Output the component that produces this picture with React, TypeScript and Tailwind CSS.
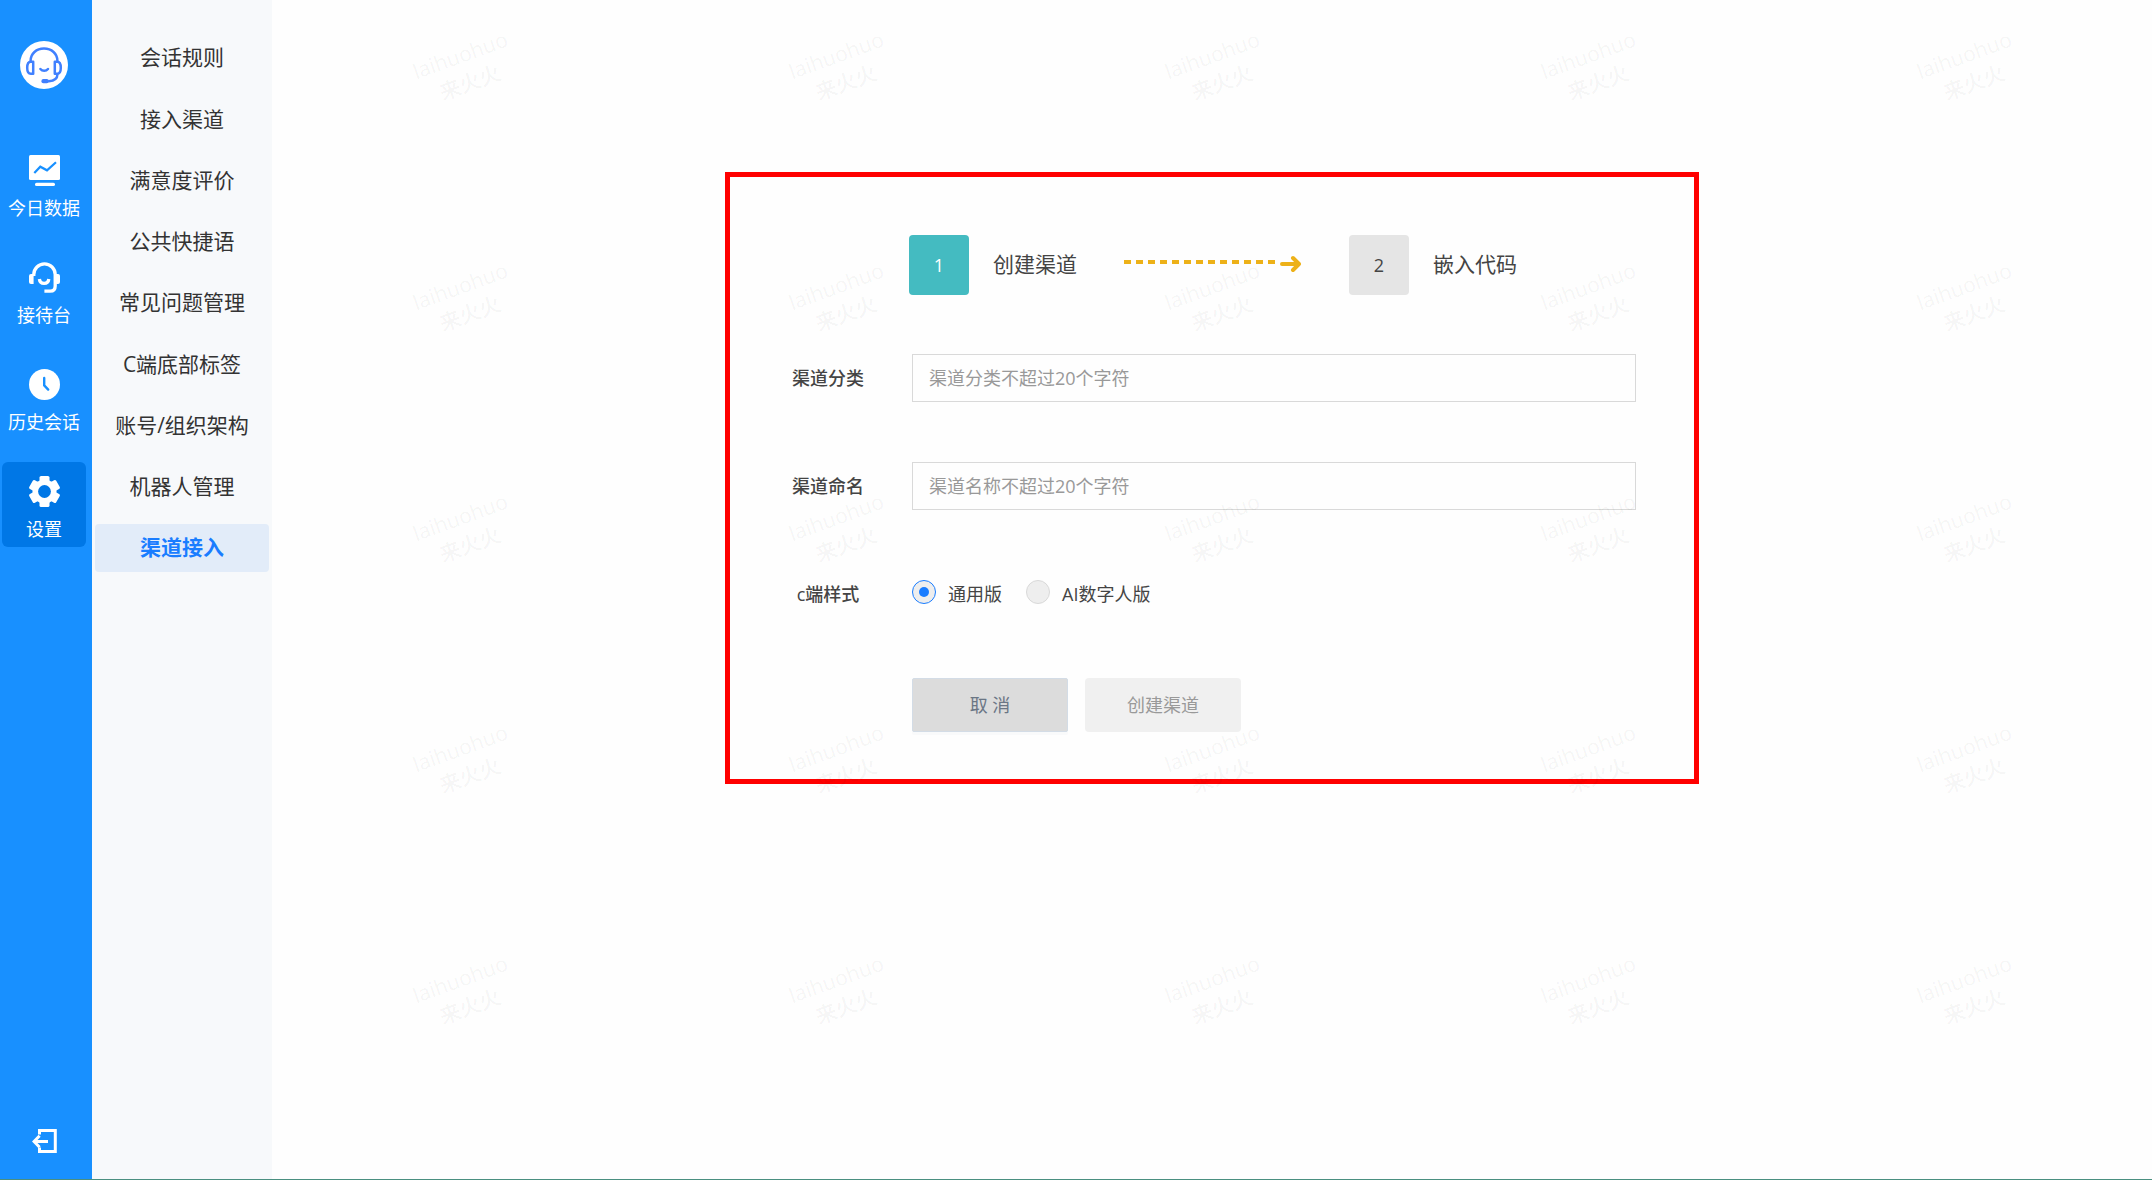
import React, { useState } from "react";
import clsx from "clsx";

const AvatarIcon = () => (
  <svg width="48" height="48" viewBox="0 0 48 48" fill="none">
    <circle cx="24" cy="24" r="24" fill="#fff" />
    <g stroke="#4080ff" strokeWidth="2.5" strokeLinecap="round" strokeLinejoin="round">
      <path d="M10.6 20C10.6 12.6 16.4 7.6 24 7.6S37.4 12.6 37.4 20" />
      <path d="M13.2 20.8v12h-2.4c-2.2 0-3.6-2.4-3.6-6s1.4-6 3.6-6z" />
      <path d="M34.8 20.8v12h2.4c2.2 0 3.6-2.4 3.6-6s-1.4-6-3.6-6z" />
      <path d="M20.4 28c2 2.4 5.6 2.4 7.6 0" />
      <path d="M37.4 33.4c0 3.8-3.2 6.2-8.6 6.8" />
    </g>
    <rect x="21.4" y="38" width="7.4" height="4.2" rx="2" fill="#4080ff" />
  </svg>
);

const DataIcon = () => (
  <svg width="31" height="31" viewBox="0 0 31 31" fill="none">
    <rect width="31" height="25" rx="1.5" fill="#fff" />
    <path d="M5.3 18l6-6.3 6.7 3.6 9-8" stroke="#1890ff" strokeWidth="2.2" />
    <rect x="6" y="27.7" width="20" height="3.3" rx="1.6" fill="#fff" />
  </svg>
);

const DeskIcon = () => (
  <svg width="31" height="31" viewBox="0 0 31 31" fill="none">
    <g stroke="#fff" strokeWidth="3.3">
      <path d="M4.8 14v-1.4a10.7 10.7 0 0 1 21.4 0V24c0 3.2-1.8 5.2-5 5.2h-5.8" />
      <path d="M10.4 17c.6 5.8 8.8 5.8 9.4 0" />
    </g>
    <path d="M4.6 12v10H2a2 2 0 0 1-2-2v-6a2 2 0 0 1 2-2zM26 12v10h3a2 2 0 0 0 2-2v-6a2 2 0 0 0-2-2z" fill="#fff" />
  </svg>
);

const HistoryIcon = () => (
  <svg width="31" height="31" viewBox="0 0 31 31" fill="none">
    <circle cx="15.5" cy="15.5" r="15.5" fill="#fff" />
    <path d="M15.2 9v7.4l4 4.2" stroke="#1890ff" strokeWidth="2.4" strokeLinecap="round" strokeLinejoin="round" />
  </svg>
);

const SettingsIcon = () => (
  <svg width="31" height="31" viewBox="0 0 31 31">
    <g fill="#fff">
      <circle cx="15.5" cy="15.5" r="12" />
      {[0, 60, 120].map((deg) => (
        <rect key={deg} x="10.5" width="10" height="31" rx="1.6" transform={`rotate(${deg} 15.5 15.5)`} />
      ))}
    </g>
    <circle cx="15.5" cy="15.5" r="6.4" fill="#0077e6" />
  </svg>
);

const ExitIcon = () => (
  <svg width="25" height="24" viewBox="0 0 25 24" fill="none" stroke="#fff" strokeWidth="3">
    <path d="M7.5 5.6V1.5h15.8v21H7.5v-4.1" />
    <path d="M16 12.5H3M7.6 6.8L2 12.5l5.6 5.7" />
  </svg>
);

const ArrowIcon = () => (
  <svg width="177" height="20" viewBox="0 0 177 20" fill="none" stroke="#edb118">
    <path d="M0 7h153" strokeWidth="4" strokeDasharray="7 5" />
    <path d="M158 9h17M169 3l6 6-6 6" strokeWidth="4" strokeLinecap="round" strokeLinejoin="round" />
  </svg>
);

const mainNav = [
  { label: "今日数据", icon: DataIcon },
  { label: "接待台", icon: DeskIcon },
  { label: "历史会话", icon: HistoryIcon },
  { label: "设置", icon: SettingsIcon },
];

const subNav = [
  "会话规则",
  "接入渠道",
  "满意度评价",
  "公共快捷语",
  "常见问题管理",
  "C端底部标签",
  "账号/组织架构",
  "机器人管理",
  "渠道接入",
];

const styleOptions = [
  { value: "common", label: "通用版" },
  { value: "ai", label: "AI数字人版" },
];

const Sidebar = () => (
  <aside className="w-[92px] shrink-0 bg-[#1890ff] text-white flex flex-col pl-0.5 pr-1.5 pt-[41px] pb-[26px]">
    <a href="#" aria-label="客服" className="self-center">
      <AvatarIcon />
    </a>
    <nav className="mt-[52px] flex flex-col gap-[22px]">
      {mainNav.map(({ label, icon: Icon }) => (
        <a
          key={label}
          href="#"
          className={clsx(
            "flex flex-col items-center rounded-md pt-3.5 pb-1.5 gap-2.5 text-lg leading-6 whitespace-nowrap",
            label === "设置" && "bg-[#0077e6]",
          )}
        >
          <Icon />
          {label}
        </a>
      ))}
    </nav>
    <button type="button" aria-label="退出" className="mt-auto self-center">
      <ExitIcon />
    </button>
  </aside>
);

const SubMenu = () => (
  <nav className="w-[180px] shrink-0 bg-[#f7f9fb] px-[3px] pt-[34px]">
    <ul className="h-[538px] flex flex-col justify-between">
      {subNav.map((item) => (
        <li key={item}>
          <a
            href="#"
            className={clsx(
              "flex h-12 items-center justify-center rounded text-[21px] whitespace-nowrap",
              item === "渠道接入" ? "bg-[#e2ecf9] text-[#1a7dff] font-bold" : "text-[#333]",
            )}
          >
            {item}
          </a>
        </li>
      ))}
    </ul>
  </nav>
);

const Watermark = () => (
  <div
    aria-hidden="true"
    className="absolute inset-0 overflow-hidden pointer-events-none select-none grid grid-cols-5 auto-rows-[231px]"
  >
    {Array.from({ length: 25 }, (_, i) => (
      <div key={i} className="flex justify-center pt-10 pl-3">
        <div className="h-15 -rotate-20 text-center text-[21px] leading-[29px] font-medium text-black/5">
          laihuohuo
          <br />
          来火火
        </div>
      </div>
    ))}
  </div>
);

interface StepProps {
  index: number;
  label: string;
  active?: boolean;
}

const Step: React.FC<StepProps> = ({ index, label, active }) => (
  <li className="flex items-center gap-6">
    <span
      className={clsx(
        "size-15 rounded flex items-center justify-center text-lg",
        active ? "bg-[#44bbc1] text-white" : "bg-[#e5e5e5] text-[#444]",
      )}
    >
      {index}
    </span>
    <span className="text-[21px] text-[#444] whitespace-nowrap">{label}</span>
  </li>
);

interface FieldProps {
  id: string;
  label: string;
  placeholder: string;
}

const Field: React.FC<FieldProps> = ({ id, label, placeholder }) => (
  <div className="flex items-center gap-12">
    <label htmlFor={id} className="w-[72px] shrink-0 text-center font-medium whitespace-nowrap">
      {label}
    </label>
    <input
      id={id}
      type="text"
      placeholder={placeholder}
      className="h-12 flex-1 min-w-0 border border-[#d9d9d9] px-4 placeholder:text-[#999] outline-none"
    />
  </div>
);

const ChannelForm = () => {
  const [style, setStyle] = useState("common");

  return (
    <section className="w-full max-w-[974px] mx-auto border-5 border-[#ff0000] pt-[58px] pb-[47px] pl-[62px] pr-[58px]">
      <ol className="flex items-center pl-[117px]">
        <Step index={1} label="创建渠道" active />
        <li aria-hidden="true" className="ml-[47px] mr-12">
          <ArrowIcon />
        </li>
        <Step index={2} label="嵌入代码" />
      </ol>

      <form className="mt-[59px] flex flex-col gap-15 text-lg text-[#444]">
        <Field id="category" label="渠道分类" placeholder="渠道分类不超过20个字符" />
        <Field id="name" label="渠道命名" placeholder="渠道名称不超过20个字符" />

        <div role="radiogroup" aria-labelledby="style-label" className="flex h-12 items-center gap-12">
          <span id="style-label" className="w-[72px] shrink-0 text-center font-medium whitespace-nowrap">
            c端样式
          </span>
          <div className="flex gap-6">
            {styleOptions.map(({ value, label }) => (
              <label key={value} className="flex items-center gap-3">
                <input
                  type="radio"
                  name="style"
                  value={value}
                  checked={style === value}
                  onChange={() => setStyle(value)}
                  className="appearance-none mb-1 size-6 rounded-full border border-[#d9d9d9] bg-[#eee] grid place-items-center checked:border-[#1a7dff] before:size-2.5 before:rounded-full checked:before:bg-[#1a7dff]"
                />
                {label}
              </label>
            ))}
          </div>
        </div>

        <div className="flex gap-[17px] pl-30">
          <button
            type="button"
            className="h-[54px] w-[156px] rounded-xs border border-[#d3dce6] bg-[#dcdcdc] text-[#6b7685] shadow-[0_3px_0_#f9fafb]"
          >
            取 消
          </button>
          <button type="submit" disabled className="h-[54px] w-[156px] rounded bg-[#f0f0f0] text-[#999]">
            创建渠道
          </button>
        </div>
      </form>
    </section>
  );
};

export default function App() {
  return (
    <div className="min-h-screen flex flex-col bg-white pb-2 font-['Open_Sans','Noto_Sans_CJK_SC',sans-serif]">
      <div className="flex-1 flex border-b border-[#4a8f80]">
        <Sidebar />
        <SubMenu />
        <main className="relative flex-1 min-w-0 bg-[#fefefe] pt-[172px]">
          <ChannelForm />
          <Watermark />
        </main>
      </div>
    </div>
  );
}
